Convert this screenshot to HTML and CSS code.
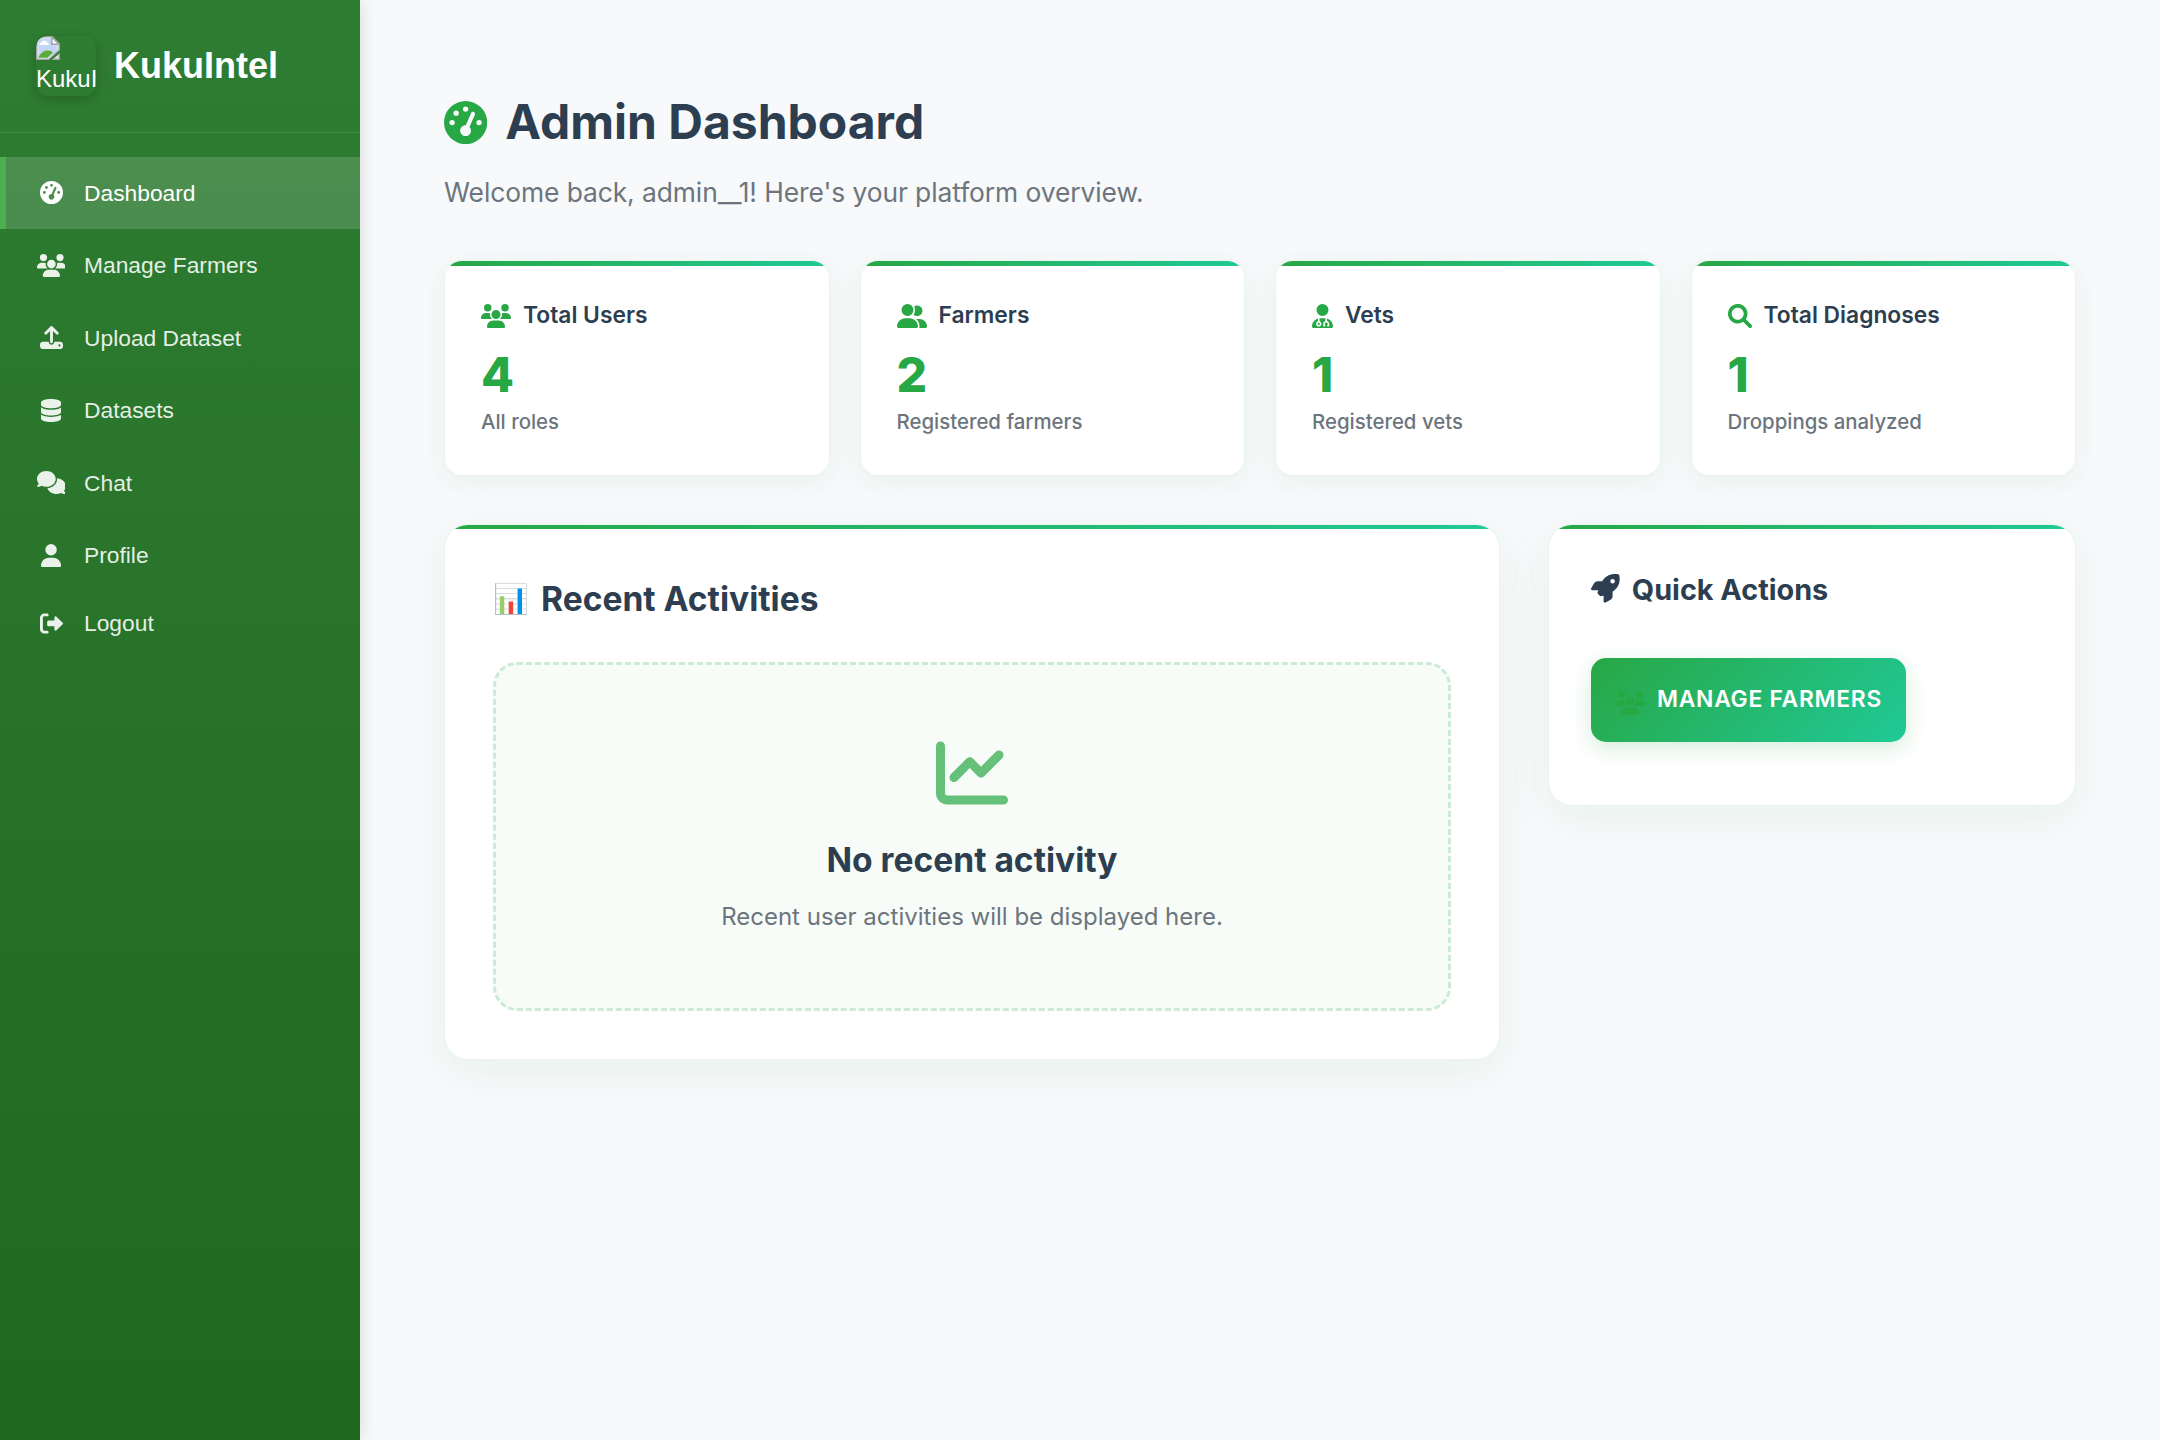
FILE: index.html
```html
<!DOCTYPE html>
<html lang="en">
<head>
<meta charset="utf-8">
<title>KukuIntel - Admin Dashboard</title>
<link rel="stylesheet" href="styles.css">
</head>
<body>
<svg class="sprite" aria-hidden="true">
  <symbol id="gauge" viewBox="0 0 512 512"><path d="M0 256a256 256 0 1 1 512 0A256 256 0 1 1 0 256zM288 96a32 32 0 1 0 -64 0 32 32 0 1 0 64 0zM256 416c35.3 0 64-28.7 64-64c0-17.4-6.9-33.1-18.1-44.6L366 161.7c5.3-12.1-.2-26.3-12.3-31.6s-26.3 .2-31.6 12.3L257.9 288c-.6 0-1.3 0-1.9 0c-35.3 0-64 28.7-64 64s28.7 64 64 64zM176 144a32 32 0 1 0 -64 0 32 32 0 1 0 64 0zM96 288a32 32 0 1 0 0-64 32 32 0 1 0 0 64zm352-32a32 32 0 1 0 -64 0 32 32 0 1 0 64 0z"/></symbol>
  <symbol id="users" viewBox="0 0 640 512"><path d="M144 0a80 80 0 1 1 0 160A80 80 0 1 1 144 0zM512 0a80 80 0 1 1 0 160A80 80 0 1 1 512 0zM0 298.7C0 239.8 47.8 192 106.7 192h42.7c15.9 0 31 3.5 44.6 9.7c-1.3 7.2-1.9 14.7-1.9 22.3c0 38.2 16.8 72.5 43.3 96c-.2 0-.4 0-.7 0H21.3C9.6 320 0 310.4 0 298.7zM405.3 320c-.2 0-.4 0-.7 0c26.6-23.5 43.3-57.8 43.3-96c0-7.6-.7-15-1.9-22.3c13.6-6.3 28.7-9.7 44.6-9.7h42.7C592.2 192 640 239.8 640 298.7c0 11.8-9.6 21.3-21.3 21.3H405.3zM224 224a96 96 0 1 1 192 0 96 96 0 1 1 -192 0zM128 485.3C128 411.7 187.7 352 261.3 352H378.7C452.3 352 512 411.7 512 485.3c0 14.7-11.9 26.7-26.7 26.7H154.7c-14.7 0-26.7-11.9-26.7-26.7z"/></symbol>
  <symbol id="user-group" viewBox="0 0 640 512"><path d="M96 128a128 128 0 1 1 256 0A128 128 0 1 1 96 128zM0 482.3C0 383.8 79.8 304 178.3 304h91.4C368.2 304 448 383.8 448 482.3c0 16.4-13.3 29.7-29.7 29.7H29.7C13.3 512 0 498.7 0 482.3zM609.3 512H471.4c5.4-9.4 8.6-20.3 8.6-32v-8c0-60.7-27.1-115.2-69.8-151.8c2.4-.1 4.7-.2 7.1-.2h61.4C567.8 320 640 392.2 640 481.3c0 17-13.8 30.7-30.7 30.7zM432 256c-31 0-59-12.6-79.3-32.9C372.4 196.5 384 163.6 384 128c0-26.8-6.6-52.1-18.3-74.3C384.3 40.1 407.2 32 432 32c61.9 0 112 50.1 112 112s-50.1 112-112 112z"/></symbol>
  <symbol id="user-doctor" viewBox="0 0 448 512"><path d="M224 256a128 128 0 1 0 0-256 128 128 0 1 0 0 256zm-96 55.2C54 332.9 0 401.3 0 482.3C0 498.7 13.3 512 29.7 512H418.3c16.4 0 29.7-13.3 29.7-29.7c0-81-54-149.4-128-171.1V362c27.6 7.1 48 32.2 48 62v40c0 8.8-7.2 16-16 16H336c-8.8 0-16-7.2-16-16s7.2-16 16-16V424c0-17.7-14.3-32-32-32s-32 14.3-32 32v24c8.8 0 16 7.2 16 16s-7.2 16-16 16H256c-8.8 0-16-7.2-16-16V424c0-29.8 20.4-54.9 48-62V304.9c-6-.6-12.1-.9-18.3-.9H178.3c-6.2 0-12.3 .3-18.3 .9v65.4c23.1 6.9 40 28.3 40 53.7c0 30.9-25.1 56-56 56s-56-25.1-56-56c0-25.4 16.9-46.8 40-53.7V311.2zM144 448a24 24 0 1 0 0-48 24 24 0 1 0 0 48z"/></symbol>
  <symbol id="search" viewBox="0 0 512 512"><path d="M500.300 443.700l-119.700-119.700c27.220-40.410 40.650-90.900 33.460-144.700C401.800 87.790 326.800 13.320 235.200 1.723C99.010-15.510-15.510 99.010 1.724 235.200c11.600 91.640 86.080 166.700 177.600 178.900c53.800 7.189 104.300-6.236 144.700-33.460l119.700 119.700c15.620 15.620 40.950 15.620 56.570 0C515.900 484.700 515.900 459.300 500.300 443.700zM79.100 208c0-70.580 57.420-128 128-128s128 57.420 128 128c0 70.580-57.420 128-128 128S79.100 278.600 79.100 208z"/></symbol>
  <symbol id="chart-line" viewBox="0 0 512 512"><path d="M64 64c0-17.7-14.3-32-32-32S0 46.3 0 64V400c0 44.2 35.8 80 80 80H480c17.7 0 32-14.3 32-32s-14.3-32-32-32H80c-8.8 0-16-7.2-16-16V64zm406.600 86.600c12.5-12.5 12.5-32.8 0-45.3s-32.8-12.5-45.3 0L320 210.7l-57.4-57.4c-12.5-12.5-32.8-12.5-45.3 0l-112 112c-12.5 12.5-12.5 32.8 0 45.3s32.8 12.5 45.3 0L240 221.3l57.4 57.4c12.5 12.5 32.8 12.5 45.3 0l128-128z"/></symbol>
  <symbol id="upload" viewBox="0 0 512 512"><path d="M288 109.3V352c0 17.7-14.3 32-32 32s-32-14.3-32-32V109.3l-73.4 73.4c-12.5 12.5-32.8 12.5-45.3 0s-12.5-32.8 0-45.3l128-128c12.5-12.5 32.8-12.5 45.3 0l128 128c12.5 12.5 12.5 32.8 0 45.3s-32.8 12.5-45.3 0L288 109.3zM64 352H192c0 35.3 28.7 64 64 64s64-28.7 64-64H448c35.3 0 64 28.7 64 64v32c0 35.3-28.7 64-64 64H64c-35.3 0-64-28.7-64-64V416c0-35.3 28.7-64 64-64zM432 456a24 24 0 1 0 0-48 24 24 0 1 0 0 48z"/></symbol>
  <symbol id="database" viewBox="0 0 448 512"><path d="M448 80v48c0 44.2-100.3 80-224 80S0 172.2 0 128V80C0 35.8 100.3 0 224 0S448 35.8 448 80zM393.2 214.7c20.8-7.4 39.9-16.9 54.8-28.6V288c0 44.2-100.3 80-224 80S0 332.2 0 288V186.1c14.9 11.8 34 21.2 54.8 28.6C99.7 230.7 159.5 240 224 240s124.3-9.3 169.2-25.3zM0 346.1c14.9 11.8 34 21.2 54.8 28.6C99.7 390.7 159.5 400 224 400s124.3-9.3 169.2-25.3c20.8-7.4 39.9-16.9 54.8-28.6V432c0 44.2-100.3 80-224 80S0 476.2 0 432V346.1z"/></symbol>
  <symbol id="comments" viewBox="0 0 640 512"><path d="M208 352c114.9 0 208-78.8 208-176S322.9 0 208 0S0 78.8 0 176c0 38.6 14.7 74.3 39.6 103.4c-3.5 9.4-8.7 17.7-14.2 24.7c-4.8 6.2-9.7 11-13.3 14.3c-1.8 1.6-3.3 2.9-4.3 3.7c-.5 .4-.9 .7-1.1 .8l-.2 .2C1 327.2-1.4 334.4 .8 340.9S9.1 352 16 352c21.8 0 43.8-5.6 62.1-12.5c9.2-3.5 17.8-7.4 25.2-11.4C134.1 343.3 169.8 352 208 352zM448 176c0 112.3-99.1 196.9-216.5 207C255.8 457.4 336.4 512 432 512c38.2 0 73.9-8.7 104.7-23.9c7.5 4 16 7.9 25.2 11.4c18.3 6.9 40.3 12.5 62.1 12.5c6.9 0 13.1-4.5 15.2-11.1c2.1-6.6-.2-13.8-5.8-17.9l-.2-.2c-.2-.2-.6-.4-1.1-.8c-1-.8-2.5-2-4.3-3.7c-3.6-3.3-8.5-8.1-13.3-14.3c-5.5-7-10.7-15.4-14.2-24.7c24.9-29 39.6-64.7 39.6-103.4c0-92.8-84.9-168.9-192.6-175.5c.4 5.1 .6 10.3 .6 15.5z"/></symbol>
  <symbol id="user" viewBox="0 0 448 512"><path d="M224 256A128 128 0 1 0 224 0a128 128 0 1 0 0 256zm-45.7 48C79.8 304 0 383.8 0 482.3C0 498.7 13.3 512 29.7 512H418.3c16.4 0 29.7-13.3 29.7-29.7C448 383.8 368.2 304 269.7 304H178.3z"/></symbol>
  <symbol id="logout" viewBox="0 0 512 512"><path d="M96 480h64C177.700 480 192 465.700 192 448S177.700 416 160 416H96c-17.670 0-32-14.330-32-32V128c0-17.670 14.330-32 32-32h64C177.700 96 192 81.670 192 64S177.700 32 160 32H96C42.980 32 0 74.980 0 128v256C0 437 42.980 480 96 480zM504.800 238.500l-144.100-136c-6.975-6.578-17.200-8.375-26-4.594c-8.803 3.797-14.510 12.470-14.510 22.050l-.0918 72l-128-.001c-17.690 0-32.020 14.330-32.020 32v64c0 17.670 14.340 32 32.020 32l128 .001l.0918 72c0 9.578 5.707 18.250 14.510 22.050c8.803 3.781 19.030 1.984 26-4.594l144.100-136C514.400 264.400 514.400 247.600 504.800 238.500z"/></symbol>
  <symbol id="rocket" viewBox="0 0 512 512"><path d="M156.6 384.9L125.7 354c-8.5-8.5-11.5-20.8-7.7-32.2c3-8.9 7-20.5 11.8-33.8L24 288c-8.6 0-16.6-4.6-20.9-12.1s-4.2-16.7 .2-24.1l52.5-88.5c13-21.9 36.5-35.3 61.9-35.3l82.3 0c2.4-4 4.8-7.7 7.2-11.3C289.1-4.1 411.1-8.1 483.9 5.3c11.6 2.1 20.6 11.2 22.8 22.8c13.4 72.9 9.3 194.8-111.4 276.7c-3.5 2.4-7.3 4.8-11.3 7.2v82.3c0 25.4-13.4 49-35.3 61.9l-88.5 52.5c-7.4 4.4-16.6 4.5-24.1 .2s-12.1-12.2-12.1-20.9V380.8c-14.1 4.9-26.4 8.9-35.7 11.9c-11.2 3.6-23.4 .5-31.8-7.8zM384 168a40 40 0 1 0 0-80 40 40 0 1 0 0 80z"/></symbol>
</svg>
<div class="app">
  <aside class="sidebar">
    <div class="brand">
      <div class="brand-logo">
        <svg class="brand-pic" viewBox="0 0 16 16">
          <path d="M0 0H11L16 5V9.500L8.500 16H0z" fill="#a3a3a3"/>
          <path d="M1 1H10.500L15 5.500V9L8.500 15H1z" fill="#fff"/>
          <path d="M1.500 1.500H10V6H14.500V9.500L8.500 14.500H1.500z" fill="#c4d6f6"/>
          <path d="M2.300 6c0-1.200 .8-1.800 1.700-1.800C4.300 2.700 6.800 2.700 7.200 4.200c1 0 1.400 .8 1.400 1.800z" fill="#fff"/>
          <path d="M1.500 14.500C3 11.500 5 9.700 8 9.700C9.500 9.700 10.500 10.300 11.200 11.200L7.500 14.500z" fill="#58ad38"/>
          <path d="M16 11.200V16H10.200z" fill="#a3a3a3"/>
          <path d="M15 12.500V15H12z" fill="#e4efe0"/>
          <path d="M10.500 .7V5.500H15.300z" fill="#fff" stroke="#a3a3a3"/>
        </svg>
        <span class="brand-alt">KukuI</span>
      </div>
      <span class="brand-name">KukuIntel</span>
    </div>
    <nav class="menu">
      <a class="menu-item active"><span class="menu-icon"><svg class="icon"><use href="#gauge"/></svg></span>Dashboard</a>
      <a class="menu-item"><span class="menu-icon"><svg class="icon wide"><use href="#users"/></svg></span>Manage Farmers</a>
      <a class="menu-item"><span class="menu-icon"><svg class="icon"><use href="#upload"/></svg></span>Upload Dataset</a>
      <a class="menu-item"><span class="menu-icon"><svg class="icon narrow"><use href="#database"/></svg></span>Datasets</a>
      <a class="menu-item"><span class="menu-icon"><svg class="icon wide"><use href="#comments"/></svg></span>Chat</a>
      <a class="menu-item"><span class="menu-icon"><svg class="icon narrow"><use href="#user"/></svg></span>Profile</a>
      <a class="menu-item logout"><span class="menu-icon"><svg class="icon"><use href="#logout"/></svg></span>Logout</a>
    </nav>
  </aside>
  <main class="main">
    <header class="page-head">
      <h1 class="page-title"><svg class="icon"><use href="#gauge"/></svg>Admin Dashboard</h1>
      <p class="page-sub">Welcome back, admin__1! Here's your platform overview.</p>
    </header>
    <section class="stats">
      <article class="card stat">
        <h2 class="stat-title"><svg class="icon wide"><use href="#users"/></svg>Total Users</h2>
        <div class="stat-value">4</div><div class="stat-label">All roles</div>
      </article>
      <article class="card stat">
        <h2 class="stat-title"><svg class="icon wide"><use href="#user-group"/></svg>Farmers</h2>
        <div class="stat-value">2</div><div class="stat-label">Registered farmers</div>
      </article>
      <article class="card stat">
        <h2 class="stat-title"><svg class="icon narrow"><use href="#user-doctor"/></svg>Vets</h2>
        <div class="stat-value">1</div><div class="stat-label">Registered vets</div>
      </article>
      <article class="card stat">
        <h2 class="stat-title"><svg class="icon"><use href="#search"/></svg>Total Diagnoses</h2>
        <div class="stat-value">1</div><div class="stat-label">Droppings analyzed</div>
      </article>
    </section>
    <section class="panels">
      <article class="card panel activities">
        <h2 class="panel-title"><span class="emoji">📊</span>Recent Activities</h2>
        <div class="empty">
          <svg class="icon empty-icon"><use href="#chart-line"/></svg>
          <h3 class="empty-title">No recent activity</h3>
          <p class="empty-text">Recent user activities will be displayed here.</p>
        </div>
      </article>
      <article class="card panel actions">
        <h2 class="actions-title"><svg class="icon"><use href="#rocket"/></svg>Quick Actions</h2>
        <a class="action-btn"><svg class="icon wide"><use href="#users"/></svg><span class="action-text">Manage Farmers</span></a>
      </article>
    </section>
  </main>
</div>
</body>
</html>
```

FILE: styles.css
```css
* { box-sizing: border-box; margin: 0; padding: 0; }

html { font-size: 24px; }

body {
  background: #f8f9fb;
  color: #2c3e50;
  font-family: Inter, "Liberation Sans", sans-serif;
}

.sprite { display: none; }

.icon { width: 1em; height: 1em; fill: currentColor; flex: none; display: block; }
.icon.wide { width: 1.25em; }
.icon.narrow { width: .875em; }

.app { display: flex; min-height: 100vh; }

/* Sidebar */
.sidebar {
  width: 360px;
  flex: none;
  background: linear-gradient(180deg, #2e7d32 0%, #1f6820 100%);
  box-shadow: 3px 0 15px rgba(0, 0, 0, .1);
  color: #fff;
  font-family: "Liberation Sans", Arial, sans-serif;
}

.brand {
  display: flex;
  align-items: center;
  gap: 18px;
  height: 133px;
  padding: 36px;
  border-bottom: 1px solid rgba(255, 255, 255, .1);
}

.brand-logo {
  width: 60px;
  height: 60px;
  flex: none;
  overflow: hidden;
  border-radius: 12px;
  box-shadow: 0 3px 12px rgba(0, 0, 0, .2);
}

.brand-pic { display: block; width: 24px; height: 24px; }
.brand-alt { display: block; font-size: 24px; line-height: 27px; margin-top: 5px; }
.brand-name { font-size: 36px; font-weight: 700; line-height: 42px; }

.menu { padding-top: 23.5px; }

.menu-item {
  display: flex;
  align-items: center;
  height: 72.5px;
  padding: 0 36px 0 30px;
  border-left: 6px solid transparent;
  color: rgba(255, 255, 255, .9);
  font-size: 22.8px;
  line-height: 26px;
}

.menu-item.active {
  background: rgba(255, 255, 255, .15);
  border-left-color: #4caf50;
  color: #fff;
}

.menu-item.logout { height: 63px; }

.menu-icon { width: 30px; margin-right: 18px; display: flex; justify-content: center; font-size: 23px; }

/* Main area */
.main { flex: 1; padding: 84px; }

.page-head { height: 176px; }

.page-title {
  display: flex;
  align-items: center;
  gap: 18px;
  font-size: 48px;
  font-weight: 700;
  line-height: 76px;
}

.page-title .icon { width: 43.2px; height: 43.2px; margin-top: 1px; color: #28a745; }

.page-sub {
  margin-top: 12px;
  font-size: 26.4px;
  line-height: 40px;
  letter-spacing: -.08px;
  color: #6c757d;
}

.card {
  position: relative;
  overflow: hidden;
  background: #fff;
  border: 1px solid rgba(40, 167, 69, .1);
}

.card::before {
  content: "";
  position: absolute;
  top: 0;
  left: 0;
  right: 0;
  height: 4px;
  background: linear-gradient(90deg, #28a745, #20c997);
}

.stats { display: grid; grid-template-columns: repeat(4, 1fr); gap: 30px; }

.stat {
  height: 216px;
  padding: 36px;
  border-radius: 18px;
  box-shadow: 0 6px 30px rgba(40, 150, 69, .08);
}

.stat::before { height: 5px; }

.stat-title {
  display: flex;
  align-items: center;
  gap: 12px;
  font-size: 22.8px;
  font-weight: 600;
  line-height: 36px;
}

.stat-title .icon { font-size: 24px; color: #28a745; margin-top: 2px; }

.stat-value {
  margin-top: 12px;
  font-size: 48px;
  font-weight: 800;
  line-height: 60px;
  color: #28a745;
}

.stat-label { margin-top: 2px; font-size: 20.4px; font-weight: 500; line-height: 30px; color: #6c757d; }

/* Panels */
.panels {
  display: grid;
  grid-template-columns: 2fr 1fr;
  align-items: start;
  gap: 48px;
  margin-top: 48px;
}

.panel { border-radius: 24px; box-shadow: 0 12px 45px rgba(40, 150, 69, .08); }

.activities { height: 536px; padding: 48px; }

.panel-title {
  display: flex;
  align-items: center;
  gap: 12px;
  font-size: 33.6px;
  font-weight: 700;
  line-height: 52px;
}

.emoji { font-size: 28.8px; }

.empty {
  display: flex;
  flex-direction: column;
  align-items: center;
  height: 349px;
  margin-top: 37px;
  padding-top: 72px;
  border: 3px dashed rgba(40, 167, 69, .2);
  border-radius: 24px;
  background: #f7fcf8;
}

.empty-icon { font-size: 72px; color: #28a745; opacity: .7; }
.empty-title { margin-top: 24px; font-size: 33.6px; font-weight: 700; line-height: 54px; }
.empty-text { margin-top: 12px; font-size: 24px; line-height: 36px; color: #6c757d; }

.actions { height: 282px; padding: 42px; }

.actions-title {
  display: flex;
  align-items: center;
  gap: 12px;
  font-size: 28.8px;
  font-weight: 700;
  line-height: 45px;
}

.actions-title .icon { margin-top: -2px; }

.action-btn {
  display: flex;
  align-items: center;
  gap: 12px;
  width: 315px;
  height: 84px;
  margin-top: 46px;
  padding: 0 24px;
  border-radius: 15px;
  background: linear-gradient(135deg, #28a745, #20c997);
  box-shadow: 0 6px 22px rgba(40, 167, 69, .2);
  color: #fff;
  font-size: 22.8px;
  font-weight: 600;
  letter-spacing: .75px;
  text-transform: uppercase;
  white-space: nowrap;
}

.action-btn .icon { font-size: 24px; color: #28a745; margin-top: 6px; }
.action-text { line-height: 28px; margin-top: -2px; }
```
